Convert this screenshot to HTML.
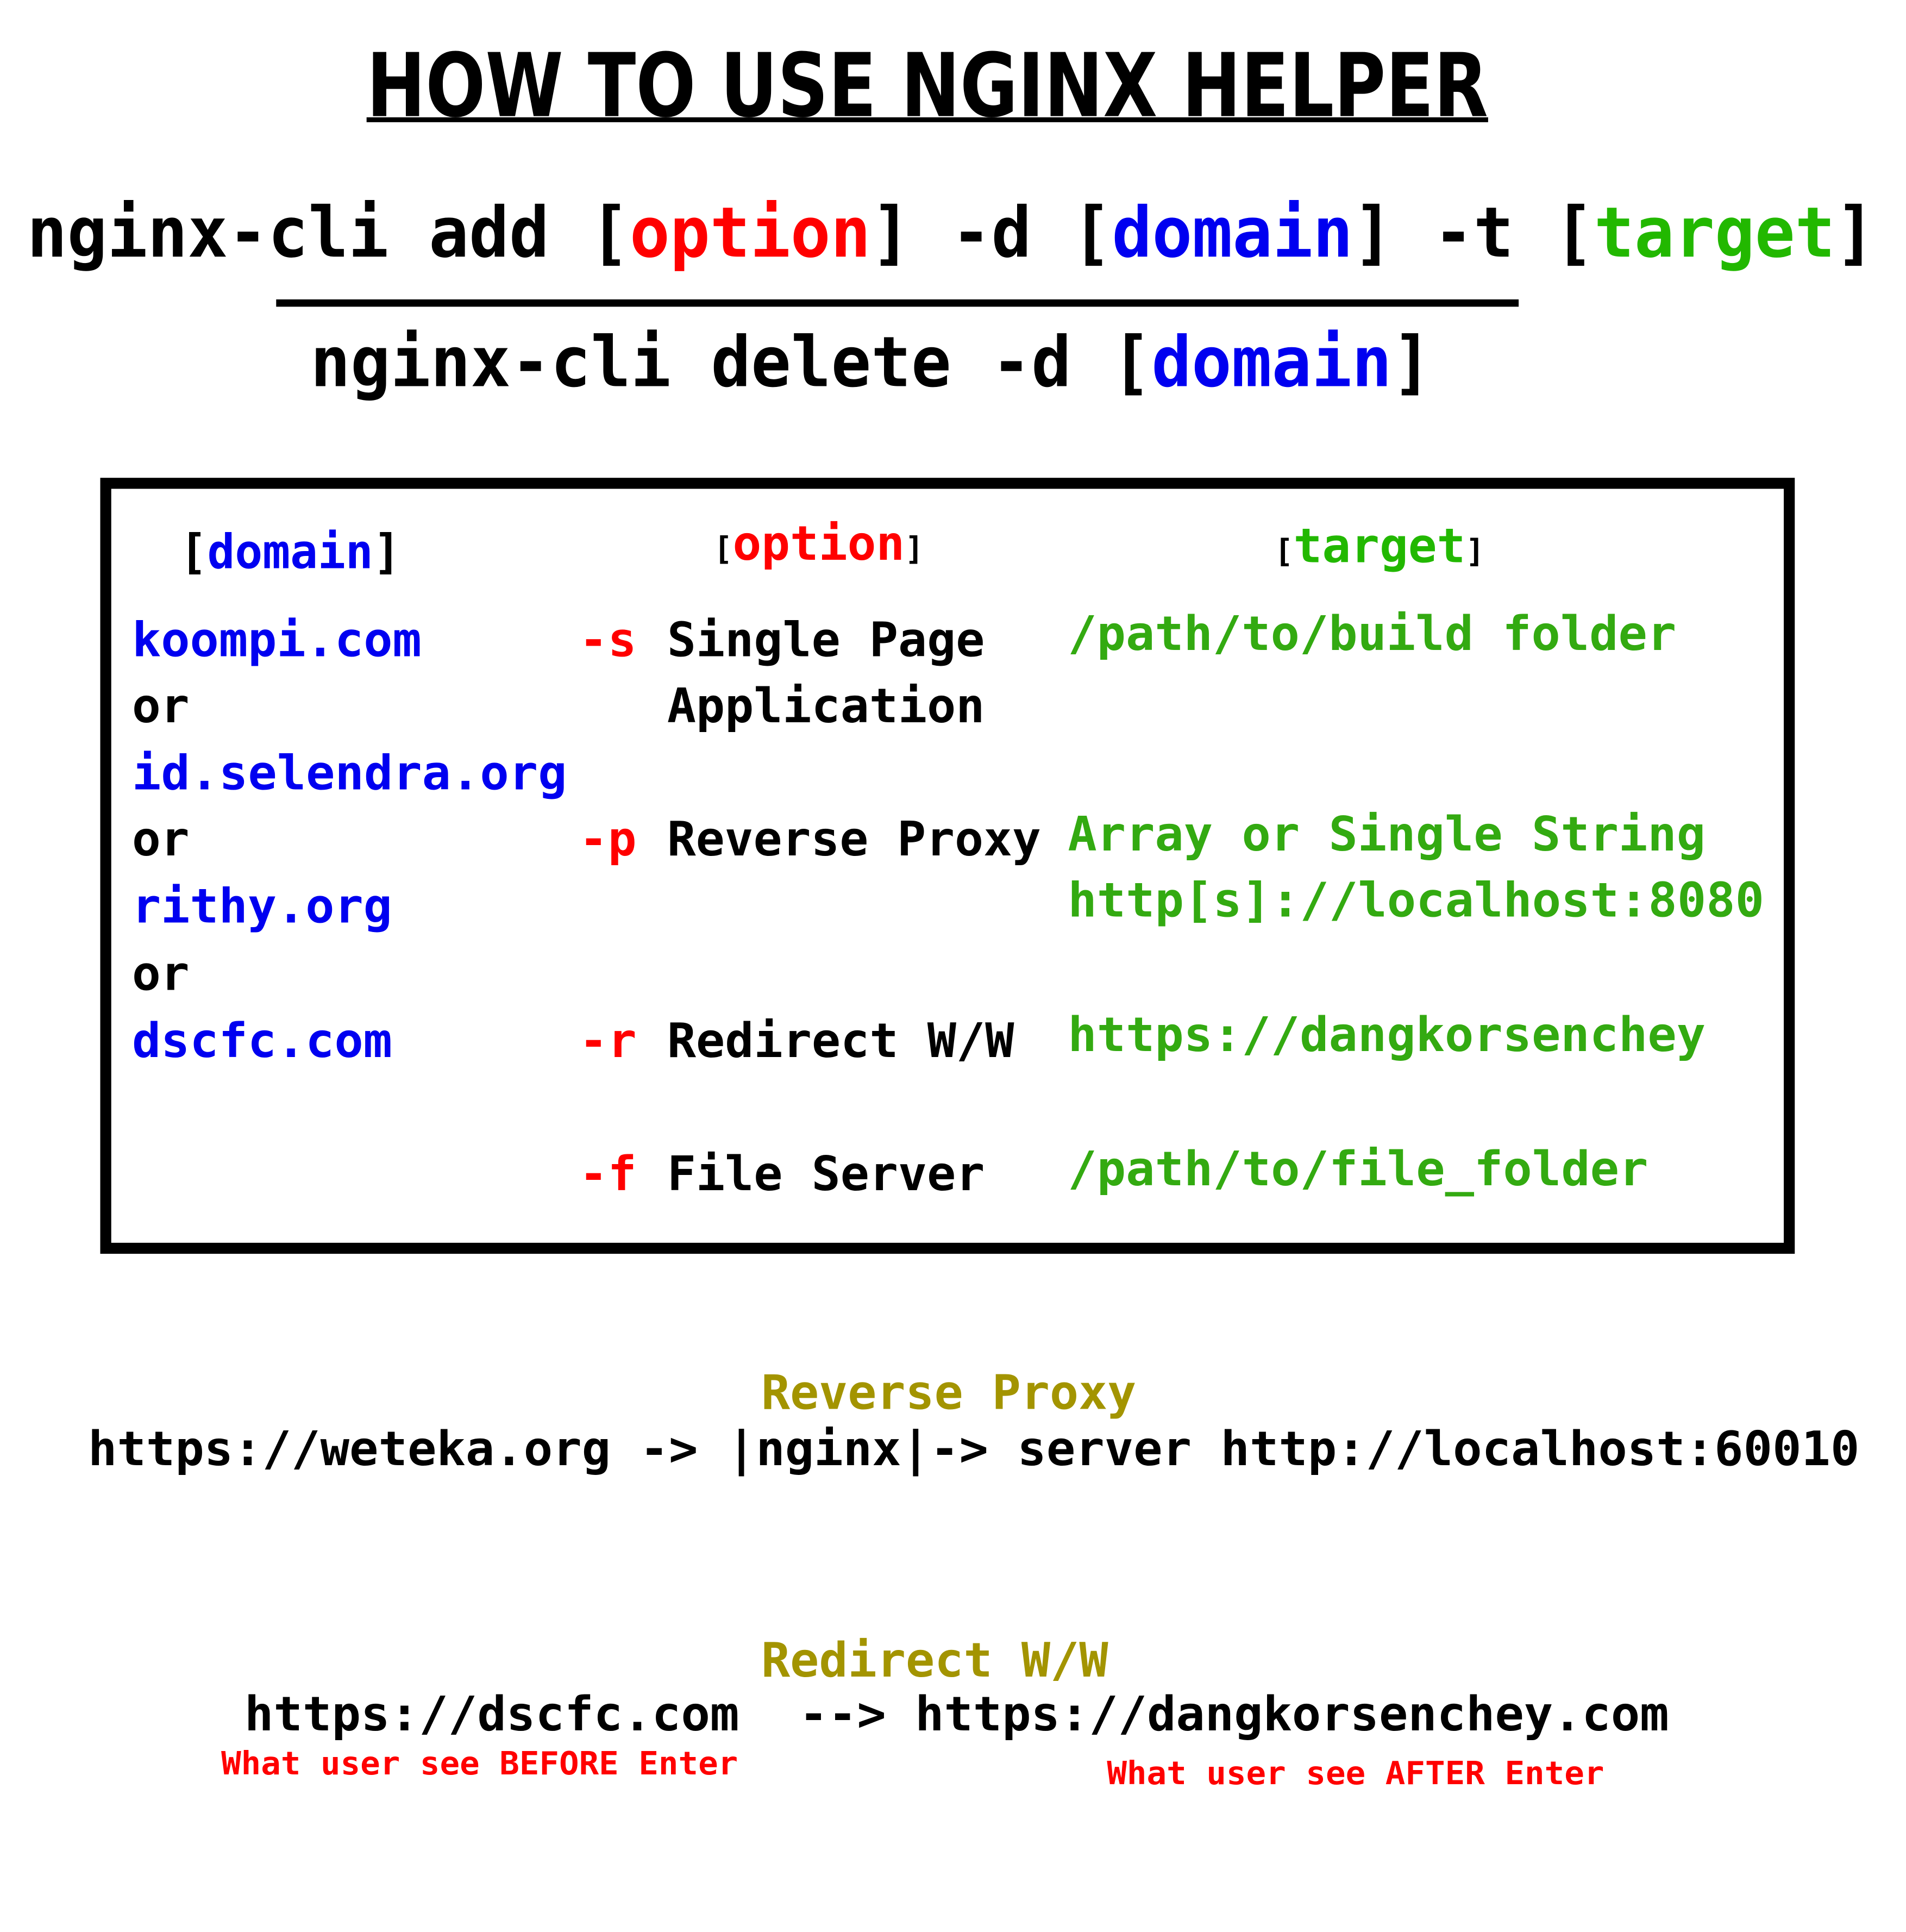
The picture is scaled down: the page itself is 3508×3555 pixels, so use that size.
<!DOCTYPE html>
<html><head><meta charset="utf-8"><style>
html,body{margin:0;padding:0;background:#fff;}
svg{display:block;}
text{font-family:"DejaVu Sans Mono","Liberation Mono",monospace;font-weight:bold;white-space:pre;}
.t{font-family:"DejaVu Sans","Liberation Sans",sans-serif;}
.b{fill:#0000f0}.r{fill:#ff0000}.g{fill:#22b800}.k{fill:#000}.o{fill:#a39400}.pg{fill:#33aa11}
</style></head><body>
<svg width="3508" height="3555" viewBox="0 0 1560 1581" xmlns="http://www.w3.org/2000/svg">
<rect width="1560" height="1581" fill="#fff"/>
<text class="t" x="300" y="95" font-size="72" textLength="918" lengthAdjust="spacingAndGlyphs">HOW TO USE NGINX HELPER</text>
<rect x="300" y="96" width="918" height="4" fill="#000"/>

<text x="22" y="210" font-size="57" textLength="1513" lengthAdjust="spacingAndGlyphs">nginx-cli add [<tspan class="r">option</tspan>] -d [<tspan class="b">domain</tspan>] -t [<tspan class="g">target</tspan>]</text>
<rect x="226" y="245" width="1017" height="6" fill="#000"/>
<text x="254" y="316" font-size="57" textLength="918" lengthAdjust="spacingAndGlyphs">nginx-cli delete -d [<tspan class="b">domain</tspan>]</text>

<rect x="86.5" y="395.5" width="1378" height="626" fill="none" stroke="#000" stroke-width="9"/>

<text x="147" y="465" font-size="39" textLength="181" lengthAdjust="spacingAndGlyphs">[<tspan class="b">domain</tspan>]</text>
<text x="584" y="458" font-size="39"><tspan font-size="26">[</tspan><tspan class="r">option</tspan><tspan font-size="26">]</tspan></text>
<text x="1043" y="460" font-size="39"><tspan font-size="26">[</tspan><tspan class="g">target</tspan><tspan font-size="26">]</tspan></text>

<g font-size="39">
<text class="b" x="108" y="537" textLength="237" lengthAdjust="spacingAndGlyphs">koompi.com</text>
<text x="108" y="591">or</text>
<text class="b" x="108" y="646" textLength="356" lengthAdjust="spacingAndGlyphs">id.selendra.org</text>
<text x="108" y="700">or</text>
<text class="b" x="108" y="755" textLength="213" lengthAdjust="spacingAndGlyphs">rithy.org</text>
<text x="108" y="810">or</text>
<text class="b" x="108" y="865" textLength="213" lengthAdjust="spacingAndGlyphs">dscfc.com</text>

<text class="r" x="474" y="537">-s</text>
<text x="546" y="537" textLength="260" lengthAdjust="spacingAndGlyphs">Single Page</text>
<text x="546" y="591" textLength="260" lengthAdjust="spacingAndGlyphs">Application</text>
<text class="r" x="474" y="700">-p</text>
<text x="546" y="700" textLength="306" lengthAdjust="spacingAndGlyphs">Reverse Proxy</text>
<text class="r" x="474" y="865">-r</text>
<text x="546" y="865" textLength="284" lengthAdjust="spacingAndGlyphs">Redirect W/W</text>
<text class="r" x="474" y="974">-f</text>
<text x="546" y="974" textLength="260" lengthAdjust="spacingAndGlyphs">File Server</text>

<text class="pg" x="874" y="532" textLength="498" lengthAdjust="spacingAndGlyphs">/path/to/build folder</text>
<text class="pg" x="874" y="696" textLength="522" lengthAdjust="spacingAndGlyphs">Array or Single String</text>
<text class="pg" x="874" y="750" textLength="570" lengthAdjust="spacingAndGlyphs">http[s]://localhost:8080</text>
<text class="pg" x="874" y="860" textLength="522" lengthAdjust="spacingAndGlyphs">https://dangkorsenchey</text>
<text class="pg" x="874" y="970" textLength="475" lengthAdjust="spacingAndGlyphs">/path/to/file_folder</text>
</g>

<text class="o" x="623" y="1153" font-size="39" textLength="307" lengthAdjust="spacingAndGlyphs">Reverse Proxy</text>
<text x="72" y="1199" font-size="39" textLength="1450" lengthAdjust="spacingAndGlyphs">https://weteka.org -&gt; |nginx|-&gt; server http://localhost:60010</text>

<text class="o" x="623" y="1372" font-size="39" textLength="284" lengthAdjust="spacingAndGlyphs">Redirect W/W</text>
<text x="200" y="1416" font-size="39" textLength="405" lengthAdjust="spacingAndGlyphs">https://dscfc.com</text>
<text x="654" y="1416" font-size="39" textLength="712" lengthAdjust="spacingAndGlyphs">--&gt; https://dangkorsenchey.com</text>
<text class="r" x="181" y="1452" font-size="26" textLength="423" lengthAdjust="spacingAndGlyphs">What user see BEFORE Enter</text>
<text class="r" x="906" y="1460" font-size="26" textLength="407" lengthAdjust="spacingAndGlyphs">What user see AFTER Enter</text>
</svg>
</body></html>
